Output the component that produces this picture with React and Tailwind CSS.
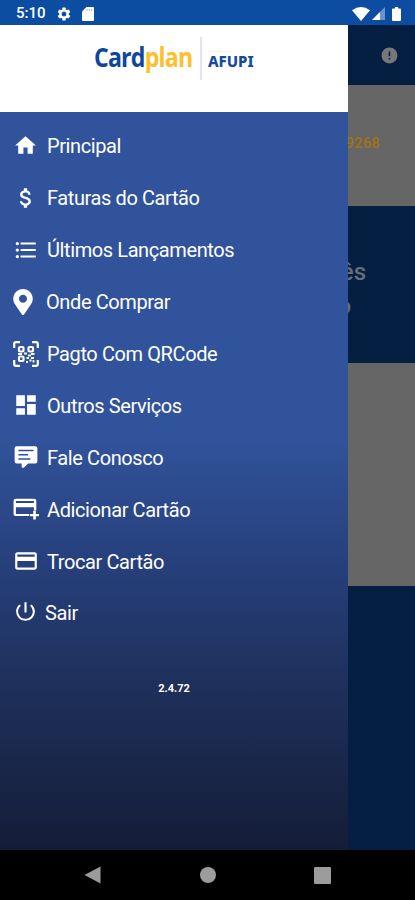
import React from 'react';
import {
  MdHome,
  MdAttachMoney,
  MdFormatListBulleted,
  MdDashboard,
  MdCreditCard,
  MdPowerSettingsNew,
  MdSettings,
  MdError,
} from 'react-icons/md';
import { FaMapMarkerAlt } from 'react-icons/fa';

const QrScanIcon = ({ className = '' }) => (
  <svg viewBox="0 0 26 26" className={className} fill="none" stroke="currentColor" strokeWidth="2.2">
    <path d="M1.200 7V3q0-1.800 1.800-1.800h4M19 1.200h4q1.800 0 1.800 1.800v4M24.800 19v4q0 1.800-1.800 1.800h-4M7 24.800H3q-1.800 0-1.800-1.800v-4" />
    <rect x="6" y="6" width="4.5" height="4.5" rx="1" />
    <rect x="15.500" y="6" width="4.5" height="4.5" rx="1" />
    <rect x="6" y="15.500" width="4.5" height="4.5" rx="1" />
    <path d="M5 13h4M11 12.500h3M15 14.500h3M18 13h3.500M13.500 17h2.500M18 17h3M16.500 19.500h2M20.500 19v2.500M14 20v2" strokeWidth="1.8" />
  </svg>
);

const CommentIcon = ({ className = '' }) => (
  <svg viewBox="0 0 24 24" className={className} fill="currentColor">
    <path
      fillRule="evenodd"
      d="M9 22a1 1 0 0 1-1-1v-3H3.500a2 2 0 0 1-2-2V4a2 2 0 0 1 2-2h17a2 2 0 0 1 2 2v12a2 2 0 0 1-2 2h-6.600l-3.700 3.700a1 1 0 0 1-.7.3H9ZM5 5.300v1.500h14V5.300H5Zm0 3.900v1.500h9V9.200H5Zm0 3.900v1.500h11v-1.500H5Z"
    />
  </svg>
);

const AddCardIcon = ({ className = '' }) => (
  <svg viewBox="0 0 24 24" className={className} fill="currentColor">
    <path
      fillRule="evenodd"
      d="M19.500 2.500h-17a2 2 0 0 0-2 2v12a2 2 0 0 0 2 2H15v-2H2.700v-6.200h16.600v3h2.200V4.500a2 2 0 0 0-2-2Zm-.2 4H2.700V4.700h16.600v1.800Z"
    />
    <path d="M18.700 13.500h2.400v3h3v2.300h-3v3h-2.400v-3h-3v-2.300h3Z" />
  </svg>
);

const menuItems = [
  { label: 'Principal', icon: MdHome, box: 'w-[34px]', size: 'w-[25px] h-[25px]' },
  { label: 'Faturas do Cartão', icon: MdAttachMoney, box: 'w-[34px]', size: 'w-[26px] h-[26px]' },
  { label: 'Últimos Lançamentos', icon: MdFormatListBulleted, box: 'w-[34px]', size: 'w-[26px] h-[26px]' },
  { label: 'Onde Comprar', icon: FaMapMarkerAlt, box: 'w-[33px]', size: 'w-5 h-[26px]' },
  { label: 'Pagto Com QRCode', icon: QrScanIcon, box: 'w-[34px]', size: 'w-[26px] h-[26px]' },
  { label: 'Outros Serviços', icon: MdDashboard, box: 'w-[34px]', size: 'w-[26px] h-[26px]' },
  { label: 'Fale Conosco', icon: CommentIcon, box: 'w-[34px]', size: 'w-[26px] h-[26px]' },
  { label: 'Adicionar Cartão', icon: AddCardIcon, box: 'w-[34px]', size: 'w-[26px] h-[26px]' },
  { label: 'Trocar Cartão', icon: MdCreditCard, box: 'w-[34px]', size: 'w-[26px] h-[26px]' },
  { label: 'Sair', icon: MdPowerSettingsNew, box: 'w-8', size: 'w-[25px] h-[25px] -mt-0.5' },
];

const StatusBar = () => (
  <div className="flex h-[25px] shrink-0 items-center bg-[#0c4da2] pl-4 pr-3.5 pt-0.5 text-white">
    <span className="w-[30px] whitespace-nowrap text-[15px] font-medium leading-none">5:10</span>
    <MdSettings className="ml-2.5 h-4 w-4" />
    <svg viewBox="0 0 12 14" className="ml-2.5 h-3.5 w-3" fill="currentColor">
      <path d="M4.500 0H11q1 0 1 1v12q0 1-1 1H1q-1 0-1-1V4.500Z" />
      <path d="M5 2v2M7.300 2v2M9.600 2v2" stroke="#9db9dc" />
    </svg>
    <div className="flex-1" />
    <svg viewBox="0 0 18 14" className="h-3.5 w-[18px]" fill="currentColor">
      <path d="M0 3.200Q9-3.200 18 3.200L9 14Z" />
    </svg>
    <svg viewBox="0 0 13 13" className="ml-0.5 h-[13px] w-[13px]" fill="currentColor">
      <path d="M13 0v13H0Z" opacity=".4" />
      <path d="M8 5v8H0Z" />
    </svg>
    <svg viewBox="0 0 9 14" className="ml-[7px] h-3.5 w-[9px]" fill="currentColor">
      <path d="M3 0h3v1.500h2q1 0 1 1V13q0 1-1 1H1q-1 0-1-1V2.500q0-1 1-1h2Z" />
    </svg>
  </div>
);

const DrawerHeader = () => (
  <div className="flex h-[87px] shrink-0 items-start bg-white pl-[94px] pt-3">
    <div className="mt-1 w-[98px] origin-left scale-x-[0.89] whitespace-nowrap font-['Open_Sans',sans-serif] text-[26px] font-bold leading-8 tracking-[-0.9px] text-[#0d469b]">
      Card<span className="text-[#fcbf2d]">plan</span>
    </div>
    <div className="ml-2 h-[43px] w-0.5 bg-[#e3e4ed]" />
    <div className="ml-1.5 mt-[14px]">
      <div className="h-px w-6 bg-[#fff3dc]" />
      <div className="font-['Noto_Sans',sans-serif] text-[15px] font-extrabold leading-[19px] text-[#174b99]">AFUPI</div>
    </div>
  </div>
);

const Drawer = () => (
  <div className="flex w-[348px] shrink-0 flex-col bg-[linear-gradient(to_bottom,#31539b_0%,#31539b_50%,#263f7a_66%,#1e305b_80%,#141d38_100%)]">
    <DrawerHeader />
    <nav className="flex flex-col pl-[13px] pt-2">
      {menuItems.map(({ label, icon: Icon, box, size }) => (
        <div key={label} className="flex h-[51.9px] items-center text-white">
          <div className={box}>
            <Icon className={size} />
          </div>
          <span className="pt-px text-[20px] leading-6 tracking-[-0.4px]">{label}</span>
        </div>
      ))}
    </nav>
    <div className="mt-[42px] text-center text-[11px] font-bold leading-4 text-white">2.4.72</div>
  </div>
);

const DimmedPage = () => (
  <div className="flex min-w-0 flex-1 flex-col overflow-hidden bg-[#041f41]">
    <div className="flex h-[60px] shrink-0 items-center justify-end pr-4">
      <MdError className="h-[19px] w-[19px] text-[#777777]" />
    </div>
    <div className="flex h-[121px] shrink-0 items-center justify-end bg-[#666666] pr-[35px] pb-1 text-[14.5px] font-medium text-[#a07415]">
      <span className="tracking-[0.3px]">9268</span>
    </div>
    <div className="flex h-[157px] shrink-0 flex-col items-end pt-[49px] text-[24px] font-medium leading-[34px] text-[#666e79]">
      <span className="mr-[49px]">ês</span>
      <span className="mr-16">o</span>
    </div>
    <div className="h-[223px] shrink-0 bg-[#666666]" />
  </div>
);

const NavigationBar = () => (
  <div className="flex h-[50px] shrink-0 items-center justify-between bg-black px-[84px]">
    <svg viewBox="0 0 17 18" className="h-[18px] w-[17px]" fill="#9c9c9c">
      <path d="M16.500.5v17L.5 9Z" />
    </svg>
    <div className="h-4 w-4 rounded-full bg-[#9c9c9c]" />
    <div className="h-[17px] w-[17px] rounded-[1px] bg-[#9c9c9c]" />
  </div>
);

export default function App() {
  return (
    <div className="flex h-[900px] w-[415px] flex-col overflow-hidden bg-black font-[Roboto,sans-serif]">
      <StatusBar />
      <div className="flex min-h-0 flex-1">
        <Drawer />
        <DimmedPage />
      </div>
      <NavigationBar />
    </div>
  );
}
